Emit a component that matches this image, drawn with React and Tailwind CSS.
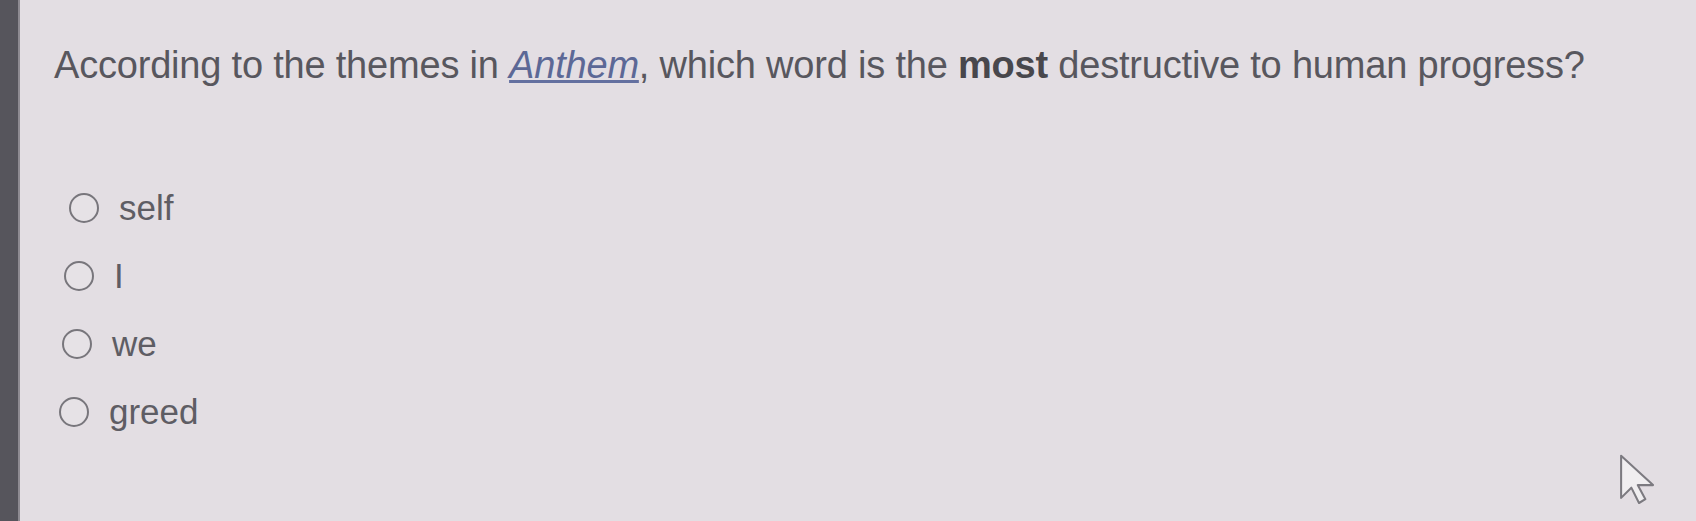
import React from "react";

// the photo is a little skewed: rows drift left as they go down
const options = [
  { label: "self", pad: "pl-[15px]" },
  { label: "I", pad: "pl-[10px]" },
  { label: "we", pad: "pl-[8px]" },
  { label: "greed", pad: "pl-[5px]" },
];

const Radio = () => (
  <span className="inline-block w-[30px] h-[30px] rounded-full border-2 border-[#78767c] bg-[#e6e2e6]" />
);

const Cursor = () => (
  <svg
    className="absolute left-[1616px] top-[451px]"
    width="46"
    height="58"
    viewBox="0 0 36 44"
    fill="none"
  >
    <path
      d="M4 3 L4 36 L12 28 L18 40 L23 37 L17 26 L29 26 Z"
      fill="#f0eef0"
      stroke="#7c7a80"
      strokeWidth="1.6"
      strokeLinejoin="round"
    />
  </svg>
);

export default function App() {
  return (
    <div className="relative w-[1696px] h-[521px] flex bg-[#e3dee3] overflow-hidden font-['Liberation_Sans',Arial,sans-serif]">
      <div className="w-[20px] h-full bg-[#56555c] border-r-2 border-[#8e8b92]" />
      <div className="flex-1 pl-[34px] pt-[41px]">
        <p className="text-[38px] leading-[48px] text-[#58575e] tracking-[-0.2px]">
          According to the themes in{" "}
          <span className="italic underline text-[#5c6896] decoration-[#6470a0]">Anthem</span>, which word is the{" "}
          <span className="font-bold text-[#48474c]">most</span> destructive to human progress?
        </p>
        <div className="mt-[99px] flex flex-col gap-[28px]">
          {options.map((o) => (
            <label key={o.label} className={`flex items-center gap-[20px] h-[40px] ${o.pad}`}>
              <Radio />
              <span className="text-[35px] text-[#5e5d64]">{o.label}</span>
            </label>
          ))}
        </div>
      </div>
      <Cursor />
    </div>
  );
}
